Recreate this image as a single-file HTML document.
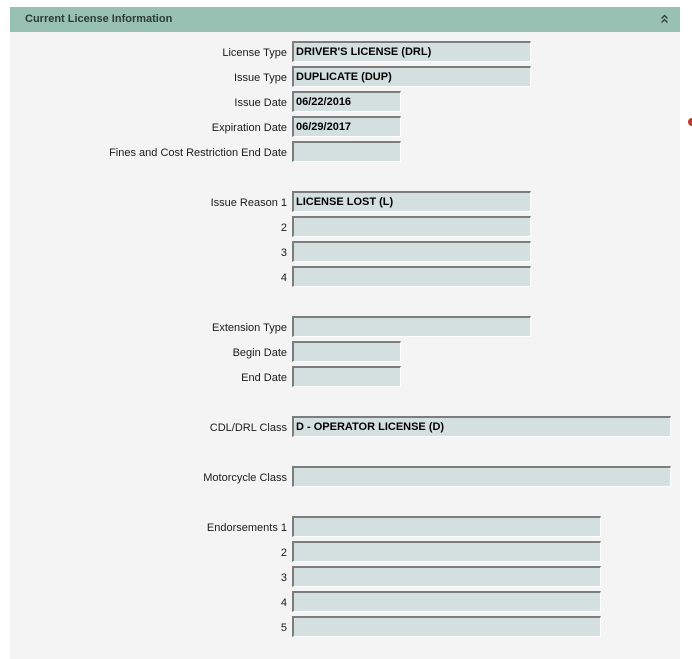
<!DOCTYPE html>
<html><head><style>
body{margin:0;background:#fff;width:692px;height:659px;position:relative;overflow:hidden;font-family:"Liberation Sans",Tahoma,sans-serif;font-size:11px;color:#1a1a1a}
.panel{position:absolute;left:10px;top:7px;width:670px;height:652px;background:#f4f4f4}
.hdr{position:absolute;left:0;top:0;width:670px;height:25px;background:#98c1b4}
.hdr span{position:absolute;left:15px;top:6px;font-weight:bold;color:#2b3b36;font-size:11px}
.hdr svg{position:absolute;left:651px;top:7px}
.l{position:absolute;right:393px;text-align:right;white-space:nowrap;height:21px;line-height:21px;margin-top:2px}
.f{position:absolute;left:282px;height:18px;background:#d3e0df;border-top:2px solid #7d7d7d;border-left:2px solid #7d7d7d;border-right:1px solid #fff;border-bottom:1px solid #fff;font-weight:bold;line-height:18px;padding-left:2px;box-sizing:content-box;color:#000}
.dot{position:absolute;left:688px;top:118px;width:8px;height:8px;border-radius:50%;background:#c0392b}
</style></head><body>
<div class="panel">
<div class="hdr"><span>Current License Information</span><svg width="7" height="10" viewBox="0 0 7 10"><path d="M0.5 4.5L3.5 1.5L6.5 4.5M0.5 8.5L3.5 5.5L6.5 8.5" fill="none" stroke="#2b3b36" stroke-width="1.3"/></svg></div>
<div class="l" style="top:34px">License Type</div><div class="f" style="top:34px;width:234px">DRIVER'S LICENSE (DRL)</div>
<div class="l" style="top:59px">Issue Type</div><div class="f" style="top:59px;width:234px">DUPLICATE (DUP)</div>
<div class="l" style="top:84px">Issue Date</div><div class="f" style="top:84px;width:104px">06/22/2016</div>
<div class="l" style="top:109px">Expiration Date</div><div class="f" style="top:109px;width:104px">06/29/2017</div>
<div class="l" style="top:134px">Fines and Cost Restriction End Date</div><div class="f" style="top:134px;width:104px"></div>
<div class="l" style="top:184px">Issue Reason 1</div><div class="f" style="top:184px;width:234px">LICENSE LOST (L)</div>
<div class="l" style="top:209px">2</div><div class="f" style="top:209px;width:234px"></div>
<div class="l" style="top:234px">3</div><div class="f" style="top:234px;width:234px"></div>
<div class="l" style="top:259px">4</div><div class="f" style="top:259px;width:234px"></div>
<div class="l" style="top:309px">Extension Type</div><div class="f" style="top:309px;width:234px"></div>
<div class="l" style="top:334px">Begin Date</div><div class="f" style="top:334px;width:104px"></div>
<div class="l" style="top:359px">End Date</div><div class="f" style="top:359px;width:104px"></div>
<div class="l" style="top:409px">CDL/DRL Class</div><div class="f" style="top:409px;width:374px">D - OPERATOR LICENSE (D)</div>
<div class="l" style="top:459px">Motorcycle Class</div><div class="f" style="top:459px;width:374px"></div>
<div class="l" style="top:509px">Endorsements 1</div><div class="f" style="top:509px;width:304px"></div>
<div class="l" style="top:534px">2</div><div class="f" style="top:534px;width:304px"></div>
<div class="l" style="top:559px">3</div><div class="f" style="top:559px;width:304px"></div>
<div class="l" style="top:584px">4</div><div class="f" style="top:584px;width:304px"></div>
<div class="l" style="top:609px">5</div><div class="f" style="top:609px;width:304px"></div>
</div>
<div class="dot"></div>
</body></html>
